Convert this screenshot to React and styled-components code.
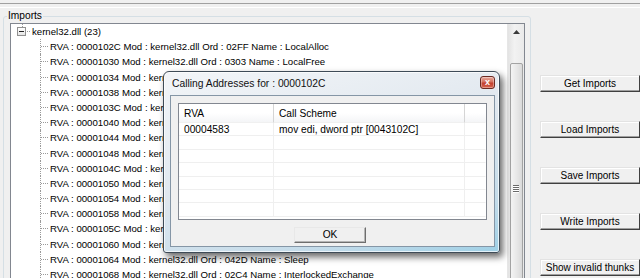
import React from "react";
import styled, { createGlobalStyle } from "styled-components";

const Global = createGlobalStyle`
  html, body { margin: 0; padding: 0; background: #f0f0f0; }
  body { font-family: "Liberation Sans", Arial, sans-serif; }
`;

const Screen = styled.div`
  position: relative;
  width: 640px;
  height: 278px;
  overflow: hidden;
  background: #f0f0f0;
  display: flex;
  flex-direction: column;
`;

const TopEdge = styled.div`
  flex: none;
  box-sizing: border-box;
  margin-top: 3px;
  height: 5px;
  border-top: 1px solid #a0a0a0;
  border-bottom: 1px solid #ffffff;
`;

const Main = styled.div`
  display: flex;
  flex: 1;
  align-items: flex-start;
`;

const Group = styled.fieldset`
  margin: 2px 0 0 3px;
  width: 533px;
  box-sizing: border-box;
  border: 1px solid #d5dfe5;
  border-radius: 3px;
  padding: 1px 5px 0 6px;
  height: 300px;
`;

const Legend = styled.legend`
  font-size: 10.2px;
  line-height: 12px;
  color: #000;
  padding: 0 1px;
  margin-left: -3px;
`;

const TreeBox = styled.div`
  display: flex;
  height: 290px;
  background: #fff;
  border: 1px solid #828790;
`;

const TreeList = styled.div`
  flex: 1;
  font-size: 9.65px;
  color: #000;
  overflow: hidden;
`;

const Row = styled.div`
  position: relative;
  height: 15.2px;
  line-height: 15.2px;
  white-space: nowrap;
  padding-left: ${(p) => (p.$child ? 39 : 21)}px;
  ${(p) =>
    p.$child &&
    `
    &::before {
      content: "";
      position: absolute;
      left: 29px;
      top: 0;
      bottom: 0;
      border-left: 1px dotted #9a9a9a;
    }
    &::after {
      content: "";
      position: absolute;
      left: 30px;
      width: 7px;
      top: 7px;
      border-top: 1px dotted #9a9a9a;
    }
  `}
`;

const Expander = styled.span`
  position: absolute;
  left: 6px;
  top: 3px;
  width: 7px;
  height: 7px;
  border: 1px solid #919191;
  background: linear-gradient(#fff, #e6e6e6);
  &::before {
    content: "";
    position: absolute;
    left: 1px;
    right: 1px;
    top: 3px;
    border-top: 1px solid #222;
  }
  &::after {
    content: "";
    position: absolute;
    left: 4px;
    top: -4px;
    height: 3px;
    border-left: 1px dotted #9a9a9a;
  }
`;

const RootStub = styled.span`
  position: absolute;
  left: 16px;
  width: 3px;
  top: 7px;
  border-top: 1px dotted #9a9a9a;
`;

const Scrollbar = styled.div`
  width: 16px;
  flex: none;
  background: linear-gradient(to right, #e3e3e3, #f2f2f2 40%, #eaeaea);
  border-left: 1px solid #e6e6e6;
  display: flex;
  flex-direction: column;
  align-items: center;
`;

const Arrow = styled.div`
  height: 16px;
  width: 16px;
  display: flex;
  align-items: center;
  justify-content: center;
`;

const Thumb = styled.div`
  margin-top: 23px;
  width: 13px;
  height: 254px;
  box-sizing: border-box;
  border: 1px solid #a3a3a3;
  border-radius: 2px;
  background: linear-gradient(to right, #f4f4f4, #e8e8e8 50%, #dadada);
  display: flex;
  flex-direction: column;
  align-items: center;
  justify-content: center;
  gap: 1px;
`;

const Grip = styled.div`
  width: 6px;
  height: 1px;
  background: #6a6a6a;
  box-shadow: 0 1px 0 #fff;
`;

const ButtonCol = styled.div`
  display: flex;
  flex-direction: column;
  gap: 29px;
  padding-top: 67px;
  margin-left: 9px;
`;

const SideButton = styled.div`
  width: 100px;
  height: 17px;
  box-sizing: border-box;
  background: #f0f0f0;
  border-top: 1px solid #e3e3e3;
  border-left: 1px solid #e3e3e3;
  border-bottom: 1px solid #404040;
  border-right: 1px solid #404040;
  box-shadow: inset 0 -1px 0 #a0a0a0, inset 1px 1px 0 #ffffff;
  font-size: 10px;
  line-height: 15px;
  text-align: center;
  white-space: nowrap;
  color: #000;
`;

/* ---- Dialog ---- */

const Dialog = styled.div`
  position: absolute;
  left: 163px;
  top: 71px;
  width: 337px;
  height: 182px;
  box-sizing: border-box;
  border: 1px solid #3e4b57;
  border-radius: 6px 6px 3px 3px;
  background: linear-gradient(165deg, #f2f5f8 0%, #e1e8ef 45%, #c5dcea 80%, #9fd0e6 100%);
  box-shadow: 3px 4px 7px rgba(0, 0, 0, 0.6), inset 0 0 0 1px rgba(255, 255, 255, 0.7);
  display: flex;
  flex-direction: column;
  padding: 0 4px 5px 6px;
`;

const TitleBar = styled.div`
  height: 23px;
  flex: none;
  display: flex;
  align-items: center;
  justify-content: space-between;
  padding-left: 2px;
`;

const Title = styled.span`
  font-size: 10.3px;
  color: #111;
  margin-top: -1px;
`;

const CloseBtn = styled.div`
  width: 15px;
  height: 13px;
  margin-top: -2px;
  box-sizing: border-box;
  border: 1px solid #6b2a22;
  border-radius: 3px;
  background: linear-gradient(#e9a99c, #d4715f 45%, #c2402f 55%, #d6654f);
  color: #fff;
  font-size: 9px;
  font-weight: bold;
  line-height: 10px;
  text-align: center;
  box-shadow: inset 0 0 0 1px rgba(255, 255, 255, 0.35);
`;

const Content = styled.div`
  flex: 1;
  background: #f0f0f0;
  border: 1px solid #8596a6;
  display: flex;
  flex-direction: column;
  align-items: flex-start;
  padding: 7px 7px 0 7px;
`;

const ListView = styled.div`
  width: 309px;
  height: 117px;
  box-sizing: border-box;
  border: 1px solid #828790;
  background: #fff;
  overflow: hidden;
  font-size: 10.2px;
  color: #000;
`;

const Grid = styled.div`
  display: grid;
  grid-template-columns: 95px 191px 1fr;
`;

const HeadCell = styled.div`
  height: 19px;
  line-height: 19px;
  padding-left: 5px;
  background: linear-gradient(#ffffff, #ffffff 50%, #f4f5f7);
  border-right: 1px solid ${(p) => (p.$last ? "transparent" : "#d5d5d5")};
  border-bottom: 1px solid #f0f0f0;
  box-sizing: border-box;
  white-space: nowrap;
`;

const Cell = styled.div`
  height: 13.4px;
  line-height: 13px;
  padding-left: 5px;
  box-sizing: border-box;
  border-bottom: 1px solid #efefef;
  border-right: 1px solid ${(p) => (p.$last ? "transparent" : "#efefef")};
  white-space: nowrap;
`;

const OkButton = styled.div`
  margin: 7px 0 0 116px;
  width: 72px;
  height: 16px;
  box-sizing: border-box;
  border-top: 1px solid #e8e8e8;
  border-left: 1px solid #e8e8e8;
  border-right: 1px solid #6e6e6e;
  border-bottom: 1px solid #6e6e6e;
  background: #f0f0f0;
  box-shadow: inset -1px -1px 0 #b5b5b5;
  font-size: 10.2px;
  line-height: 14px;
  text-align: center;
  color: #000;
`;

const children = [
  ["102C", "02FF", "LocalAlloc"],
  ["1030", "0303", "LocalFree"],
  ["1034", "01DF", "GetModuleHandleA"],
  ["1038", "0126", "GetCommandLineA"],
  ["103C", "0352", "GetVersionExA"],
  ["1040", "0243", "GetProcAddress"],
  ["1044", "0290", "HeapAlloc"],
  ["1048", "0296", "HeapFree"],
  ["104C", "0202", "GetLastError"],
  ["1050", "0086", "CloseHandle"],
  ["1054", "00A5", "CreateFileA"],
  ["1058", "0394", "ReadFile"],
  ["105C", "0484", "WriteFile"],
  ["1060", "0119", "ExitProcess"],
  ["1064", "042D", "Sleep"],
  ["1068", "02C4", "InterlockedExchange"],
];

const rows = 7;

export default function App() {
  return (
    <>
      <Global />
      <Screen>
        <TopEdge />
        <Main>
          <Group>
            <Legend>Imports</Legend>
            <TreeBox>
              <TreeList>
                <Row>
                  <Expander />
                  <RootStub />
                  kernel32.dll (23)
                </Row>
                {children.map(([rva, ord, name]) => (
                  <Row key={rva} $child>
                    RVA : 0000{rva} Mod : kernel32.dll Ord : {ord} Name : {name}
                  </Row>
                ))}
              </TreeList>
              <Scrollbar>
                <Arrow>
                  <svg width="7" height="4" viewBox="0 0 7 4">
                    <path d="M0 4 L3.5 0 L7 4 Z" fill="#3a3a3a" />
                  </svg>
                </Arrow>
                <Thumb>
                  <Grip />
                  <Grip />
                  <Grip />
                  <Grip />
                </Thumb>
              </Scrollbar>
            </TreeBox>
          </Group>
          <ButtonCol>
            <SideButton>Get Imports</SideButton>
            <SideButton>Load Imports</SideButton>
            <SideButton>Save Imports</SideButton>
            <SideButton>Write Imports</SideButton>
            <SideButton>Show invalid thunks</SideButton>
          </ButtonCol>
        </Main>

        <Dialog>
          <TitleBar>
            <Title>Calling Addresses for : 0000102C</Title>
            <CloseBtn>x</CloseBtn>
          </TitleBar>
          <Content>
            <ListView>
              <Grid>
                <HeadCell>RVA</HeadCell>
                <HeadCell>Call Scheme</HeadCell>
                <HeadCell $last />
                {Array.from({ length: rows }).map((_, i) => (
                  <React.Fragment key={i}>
                    <Cell>{i === 0 ? "00004583" : ""}</Cell>
                    <Cell>{i === 0 ? "mov edi, dword ptr [0043102C]" : ""}</Cell>
                    <Cell $last />
                  </React.Fragment>
                ))}
              </Grid>
            </ListView>
            <OkButton>OK</OkButton>
          </Content>
        </Dialog>
      </Screen>
    </>
  );
}
